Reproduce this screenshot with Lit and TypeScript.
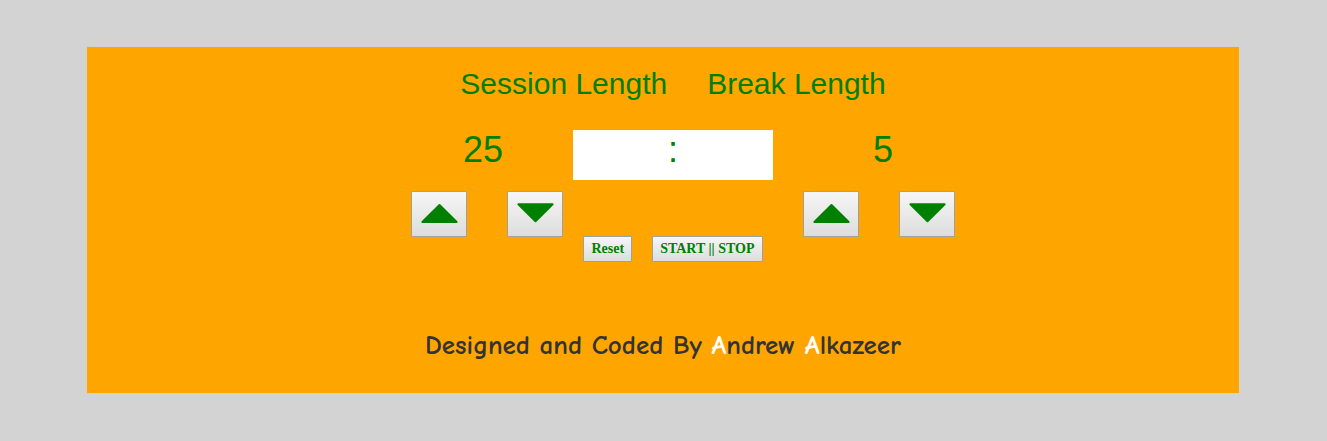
import { LitElement, html, css, svg } from "lit";
import { customElement, property, state } from "lit/decorators.js";

@customElement("arrow-button")
class ArrowButton extends LitElement {
  @property() direction: "up" | "down" = "up";
  @property() label = "";

  static styles = css`
    :host {
      display: block;
    }
    .arrow {
      display: block;
      width: 56px;
      height: 46px;
      padding: 0;
      border: 1px solid #a0a0a0;
      border-radius: 1px;
      background: linear-gradient(#f6f6f6, #dddddd);
      color: green;
      cursor: pointer;
    }
    .glyph {
      display: block;
      fill: currentColor;
      stroke: currentColor;
      stroke-linejoin: round;
      stroke-width: 2;
    }
  `;

  render() {
    const shape =
      this.direction === "up"
        ? svg`<path d="M10.4 30 27.5 13 44.6 30Z" />`
        : svg`<path d="M10.4 12.2 27.5 29.2 44.6 12.2Z" />`;
    return html`<button class="arrow" type="button" aria-label=${this.label}>
      <svg class="glyph" width="54" height="44" viewBox="0 0 54 44" aria-hidden="true">${shape}</svg>
    </button>`;
  }
}

@customElement("app-root")
class AppRoot extends LitElement {
  @state() private session = 25;
  @state() private rest = 5;

  static styles = css`
    :host {
      display: block;
      box-sizing: border-box;
      min-height: 100vh;
      padding: 47px 88px 48px 87px;
      background: #d3d3d3;
      color: green;
      font-family: Arial, "Liberation Sans", sans-serif;
    }
    .card {
      background: orange;
      padding: 20px 0 30px;
    }
    .clock {
      padding-left: 20px;
    }
    .titles {
      display: flex;
      justify-content: center;
      gap: 40px;
    }
    .title {
      margin: 0;
      font-size: 30px;
      line-height: 33px;
      font-weight: 400;
    }
    .row {
      display: grid;
      grid-template-columns: 1fr 200px 1fr;
    }
    .values {
      margin-top: 30px;
      font-size: 36px;
      line-height: 40px;
    }
    .session {
      padding-right: 70px;
      text-align: right;
    }
    .display {
      height: 50px;
      background: white;
      text-align: center;
    }
    .rest {
      padding-left: 100px;
    }
    .controls {
      margin-top: 11px;
    }
    .pair {
      display: flex;
      align-items: flex-start;
      gap: 40px;
    }
    .left {
      justify-content: flex-end;
      padding-right: 10px;
    }
    .right {
      padding-left: 30px;
    }
    .actions {
      display: flex;
      justify-content: center;
      gap: 20px;
      padding-top: 45px;
    }
    .action {
      height: 26px;
      padding: 0 7px;
      border: 1px solid #a0a0a0;
      border-radius: 1px;
      background: linear-gradient(#f6f6f6, #dddddd);
      color: green;
      font: bold 14px/22px "Times New Roman", "Liberation Serif", serif;
      white-space: nowrap;
      cursor: pointer;
    }
    .credit {
      margin: 67px 0 0;
      color: #333333;
      font: bold 27px/34px "Comic Sans MS", "Comic Neue", "Open Sans", sans-serif;
      text-align: center;
    }
    .initial {
      color: white;
    }
  `;

  render() {
    return html`
      <main class="card">
        <section class="clock">
          <div class="titles">
            <h2 class="title">Session Length</h2>
            <h2 class="title">Break Length</h2>
          </div>
          <div class="row values">
            <div class="session">${this.session}</div>
            <div class="display" role="timer">:</div>
            <div class="rest">${this.rest}</div>
          </div>
          <div class="row controls">
            <div class="pair left">
              <arrow-button direction="up" label="Longer session"></arrow-button>
              <arrow-button direction="down" label="Shorter session"></arrow-button>
            </div>
            <div class="actions">
              <button class="action" type="button">Reset</button>
              <button class="action" type="button">START || STOP</button>
            </div>
            <div class="pair right">
              <arrow-button direction="up" label="Longer break"></arrow-button>
              <arrow-button direction="down" label="Shorter break"></arrow-button>
            </div>
          </div>
        </section>
        <p class="credit">Designed and Coded By <span class="initial">A</span>ndrew <span class="initial">A</span>lkazeer</p>
      </main>
    `;
  }
}
